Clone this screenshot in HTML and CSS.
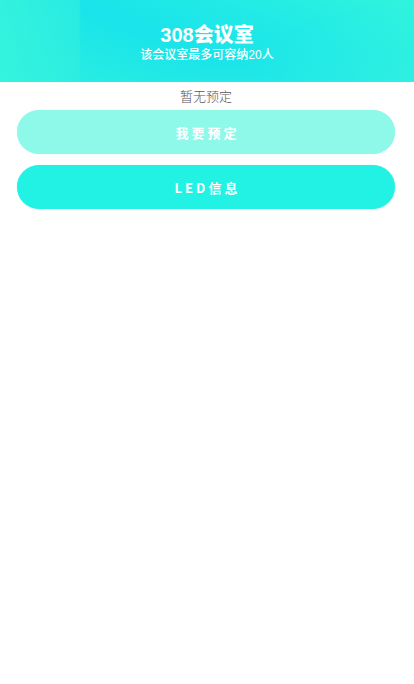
FILE: index.html
```html
<!DOCTYPE html>
<html lang="zh">
<head>
<meta charset="utf-8">
<link rel="stylesheet" href="styles.css">
</head>
<body>
<header class="hero">
  <h1 class="title">308会议室</h1>
  <p class="sub">该会议室最多可容纳20人</p>
</header>
<main class="content">
  <p class="status">暂无预定</p>
  <button class="btn btn-light">我要预定</button>
  <button class="btn btn-strong">LED信息</button>
</main>
</body>
</html>
```
FILE: styles.css
```css
html, body { margin: 0; padding: 0; background: #fff; }
body { font-family: "Noto Sans CJK SC", "Noto Sans", sans-serif; }
.hero {
  height: 82px;
  display: flex;
  flex-direction: column;
  align-items: center;
  justify-content: center;
  gap: 3px;
  color: #fff;
  background:
    linear-gradient(90deg, rgba(54,244,220,0.85) 0px, rgba(46,238,224,0.7) 79px, rgba(0,0,0,0) 81px),
    linear-gradient(160deg, rgba(255,255,255,0) 60%, rgba(60,246,220,0.5) 100%),
    linear-gradient(20deg, #2ef0e0 0%, #1ae4ea 45%, #22eae6 70%, #30f4dc 100%);
  padding-top: 5px;
  box-sizing: border-box;
}
.title {
  margin: 0;
  font-family: "Liberation Sans", "Noto Sans CJK SC", sans-serif;
  font-size: 20px;
  font-weight: 900;
  line-height: 20px;
}
.sub {
  margin: 0;
  font-family: "Liberation Sans", "Noto Sans CJK SC", sans-serif;
  font-size: 12px;
  line-height: 14px;
  font-weight: 500;
}
.content {
  padding: 5px 19px 0 17px;
  display: flex;
  flex-direction: column;
  gap: 11px;
}
.status {
  margin: 0 0 -6px;
  text-align: center;
  font-size: 13px;
  line-height: 18px;
  font-weight: 300;
  color: #555;
}
.btn {
  height: 44px;
  border: none;
  border-radius: 22px;
  color: #fff;
  font-family: "Noto Sans CJK SC", sans-serif;
  font-size: 13px;
  font-weight: 700;
  letter-spacing: 3px;
  padding: 0 0 0 3px;
}
.btn-light { background: #8ef9e8; box-shadow: 0 0 1px rgba(100,240,220,0.6); }
.btn-strong { background: #22f2e4; box-shadow: 0 0 1px rgba(40,220,220,0.6); }
```
